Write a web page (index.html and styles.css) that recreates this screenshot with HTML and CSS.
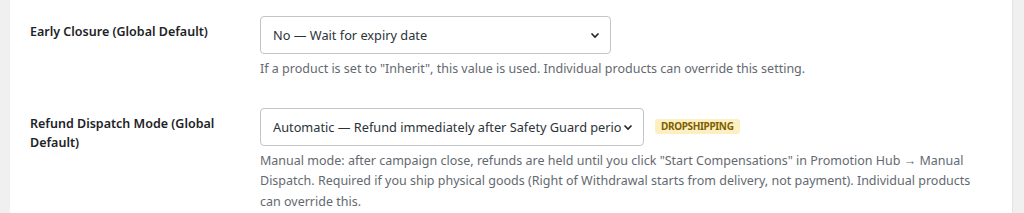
FILE: index.html
```html
<!DOCTYPE html>
<html lang="en">
<head>
    <meta charset="UTF-8">
    <meta name="viewport" content="width=device-width, initial-scale=1.0">
    <title>Promotion Hub Settings</title>
    <link rel="stylesheet" href="styles.css">
</head>
<body>
    <div class="wrap">
        <div class="card">
            <div class="form-row">
                <label class="row-label" for="earlyClosure">Early Closure (Global Default)</label>
                <div class="row-field">
                    <div class="select-wrap select-md">
                        <select id="earlyClosure">
                            <option>No — Wait for expiry date</option>
                            <option>Yes — Close when goal is reached</option>
                        </select>
                        <svg class="chevron" viewBox="0 0 16 16" width="16" height="16"><path d="M4.5 6.5l3.5 3.5 3.5-3.5" fill="none" stroke="#1d2327" stroke-width="1.6"/></svg>
                    </div>
                    <p class="description">If a product is set to "Inherit", this value is used. Individual products can override this setting.</p>
                </div>
            </div>
            <div class="form-row">
                <label class="row-label" for="refundMode">Refund Dispatch Mode (Global Default)</label>
                <div class="row-field">
                    <div class="field-line">
                        <div class="select-wrap select-lg">
                            <select id="refundMode">
                                <option>Automatic — Refund immediately after Safety Guard period</option>
                                <option>Manual — Hold refunds until dispatched</option>
                            </select>
                            <svg class="chevron" viewBox="0 0 16 16" width="16" height="16"><path d="M4.5 6.5l3.5 3.5 3.5-3.5" fill="none" stroke="#1d2327" stroke-width="1.6"/></svg>
                        </div>
                        <span class="badge">Dropshipping</span>
                    </div>
                    <p class="description">Manual mode: after campaign close, refunds are held until you click "Start Compensations" in Promotion Hub → Manual Dispatch. Required if you ship physical goods (Right of Withdrawal starts from delivery, not payment). Individual products can override this.</p>
                </div>
            </div>
        </div>
    </div>
</body>
</html>
```

FILE: styles.css
```css
body {
    margin: 0;
    background-color: #f0f0f1;
    font-family: "Noto Sans", "Open Sans", Arial, sans-serif;
    color: #1d2327;
}
.wrap {
    padding: 0 11px 0 10px;
}
.card {
    background-color: #fff;
    border-right: 1px solid #e4e4e6;
    padding: 0 20px 10px 20px;
    height: 213px;
    box-sizing: border-box;
}
.form-row {
    display: grid;
    grid-template-columns: 230px 1fr;
    padding-top: 16px;
}
.form-row + .form-row {
    padding-top: 28px;
}
.row-label {
    font-size: 12.5px;
    font-weight: 600;
    line-height: 19px;
    padding-top: 6px;
    padding-right: 20px;
}
.field-line {
    display: flex;
    align-items: center;
    gap: 11px;
}
.select-wrap {
    position: relative;
    display: inline-block;
}
.select-wrap select {
    appearance: none;
    -webkit-appearance: none;
    height: 38px;
    padding: 0 22px 0 12px;
    border: 1px solid #c3c4c7;
    border-radius: 4px;
    background: #fff;
    font-family: inherit;
    font-size: 12.75px;
    color: #2c3338;
    box-sizing: border-box;
    display: block;
}
.select-md select {
    width: 351px;
}
.select-lg select {
    width: 384px;
}
.chevron {
    position: absolute;
    right: 8px;
    top: 11px;
    pointer-events: none;
}
.badge {
    background-color: #fcf0c3;
    color: #7d5e00;
    font-size: 10px;
    font-weight: 700;
    line-height: 15px;
    letter-spacing: -0.35px;
    text-transform: uppercase;
    padding: 0 6px;
    border-radius: 3px;
}
.description {
    margin: 5px 0 0;
    font-size: 12.5px;
    line-height: 20.5px;
    color: #646970;
}
```
